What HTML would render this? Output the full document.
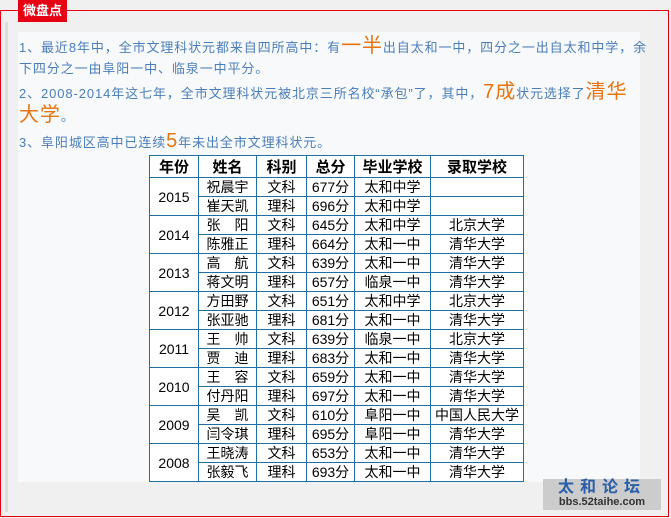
<!DOCTYPE html>
<html><head><meta charset="utf-8"><style>
body{margin:0;width:671px;height:518px;background:#f0f0f0;position:relative;overflow:hidden;font-family:"Liberation Sans","Noto Sans CJK SC",sans-serif}
.frame{position:absolute;left:0;top:10px;width:667px;height:505px;border:1px solid #e60012;}
.lab{position:absolute;left:18px;top:0;width:49px;height:22px;background:#e60012;color:#fff;font-size:13px;font-weight:bold;text-align:center;line-height:22px}
.gbar{position:absolute;left:5px;top:22px;width:3px;height:490px;background:#ddd}
.panel{position:absolute;left:18px;top:32px;width:622px;height:450px;background:#f8f9fa}
.l{position:absolute;left:19px;color:#4a7ebb;font-size:13px;letter-spacing:0.9px;white-space:nowrap;line-height:20px}
.o{color:#e8730f;font-size:20px}
table{position:absolute;left:149px;top:155px;border-collapse:collapse;font-size:14px;color:#000;background:#fff}
td{border:1px solid #1f6f9f;height:18px;padding:0;text-align:center;line-height:18px}
th{border:1px solid #1f6f9f;height:19px;padding:0;font-size:15px}
.logo{position:absolute;left:543px;top:479px;width:118px;height:31px;background:#ccc;text-align:center}
.logo .a{color:#2a5fa8;font-weight:bold;font-size:16px;letter-spacing:6px;line-height:17px}
.logo .b{color:#333;font-weight:bold;font-size:11px;line-height:13px}
</style></head><body>
<div class="frame"></div>
<div class="lab">微盘点</div>
<div class="gbar"></div>
<div class="panel"></div>
<div class="l" style="top:36px">1、最近8年中，全市文理科状元都来自四所高中：有<span class="o">一半</span>出自太和一中，四分之一出自太和中学，余</div>
<div class="l" style="top:59px">下四分之一由阜阳一中、临泉一中平分。</div>
<div class="l" style="top:82px">2、2008-2014年这七年，全市文理科状元被北京三所名校“承包”了，其中，<span class="o">7成</span>状元选择了<span class="o">清华</span></div>
<div class="l" style="top:105px"><span class="o">大学</span>。</div>
<div class="l" style="top:131px">3、阜阳城区高中已连续<span class="o">5</span>年未出全市文理科状元。</div>
<table>
<tr><th style="width:48px">年份</th><th style="width:57px">姓名</th><th style="width:49px">科别</th><th style="width:47px">总分</th><th style="width:75px">毕业学校</th><th style="width:92px">录取学校</th></tr>
<tr><td rowspan="2">2015</td><td>祝晨宇</td><td>文科</td><td>677分</td><td>太和中学</td><td></td></tr>
<tr><td>崔天凯</td><td>理科</td><td>696分</td><td>太和中学</td><td></td></tr>
<tr><td rowspan="2">2014</td><td>张　阳</td><td>文科</td><td>645分</td><td>太和中学</td><td>北京大学</td></tr>
<tr><td>陈雅正</td><td>理科</td><td>664分</td><td>太和一中</td><td>清华大学</td></tr>
<tr><td rowspan="2">2013</td><td>高　航</td><td>文科</td><td>639分</td><td>太和一中</td><td>清华大学</td></tr>
<tr><td>蒋文明</td><td>理科</td><td>657分</td><td>临泉一中</td><td>清华大学</td></tr>
<tr><td rowspan="2">2012</td><td>方田野</td><td>文科</td><td>651分</td><td>太和中学</td><td>北京大学</td></tr>
<tr><td>张亚驰</td><td>理科</td><td>681分</td><td>太和一中</td><td>清华大学</td></tr>
<tr><td rowspan="2">2011</td><td>王　帅</td><td>文科</td><td>639分</td><td>临泉一中</td><td>北京大学</td></tr>
<tr><td>贾　迪</td><td>理科</td><td>683分</td><td>太和一中</td><td>清华大学</td></tr>
<tr><td rowspan="2">2010</td><td>王　容</td><td>文科</td><td>659分</td><td>太和一中</td><td>清华大学</td></tr>
<tr><td>付丹阳</td><td>理科</td><td>697分</td><td>太和一中</td><td>清华大学</td></tr>
<tr><td rowspan="2">2009</td><td>吴　凯</td><td>文科</td><td>610分</td><td>阜阳一中</td><td>中国人民大学</td></tr>
<tr><td>闫令琪</td><td>理科</td><td>695分</td><td>阜阳一中</td><td>清华大学</td></tr>
<tr><td rowspan="2">2008</td><td>王晓涛</td><td>文科</td><td>653分</td><td>太和一中</td><td>清华大学</td></tr>
<tr><td>张毅飞</td><td>理科</td><td>693分</td><td>太和一中</td><td>清华大学</td></tr>
</table>
<div class="logo"><div class="a">太和论坛</div><div class="b">bbs.52taihe.com</div></div>
</body></html>
